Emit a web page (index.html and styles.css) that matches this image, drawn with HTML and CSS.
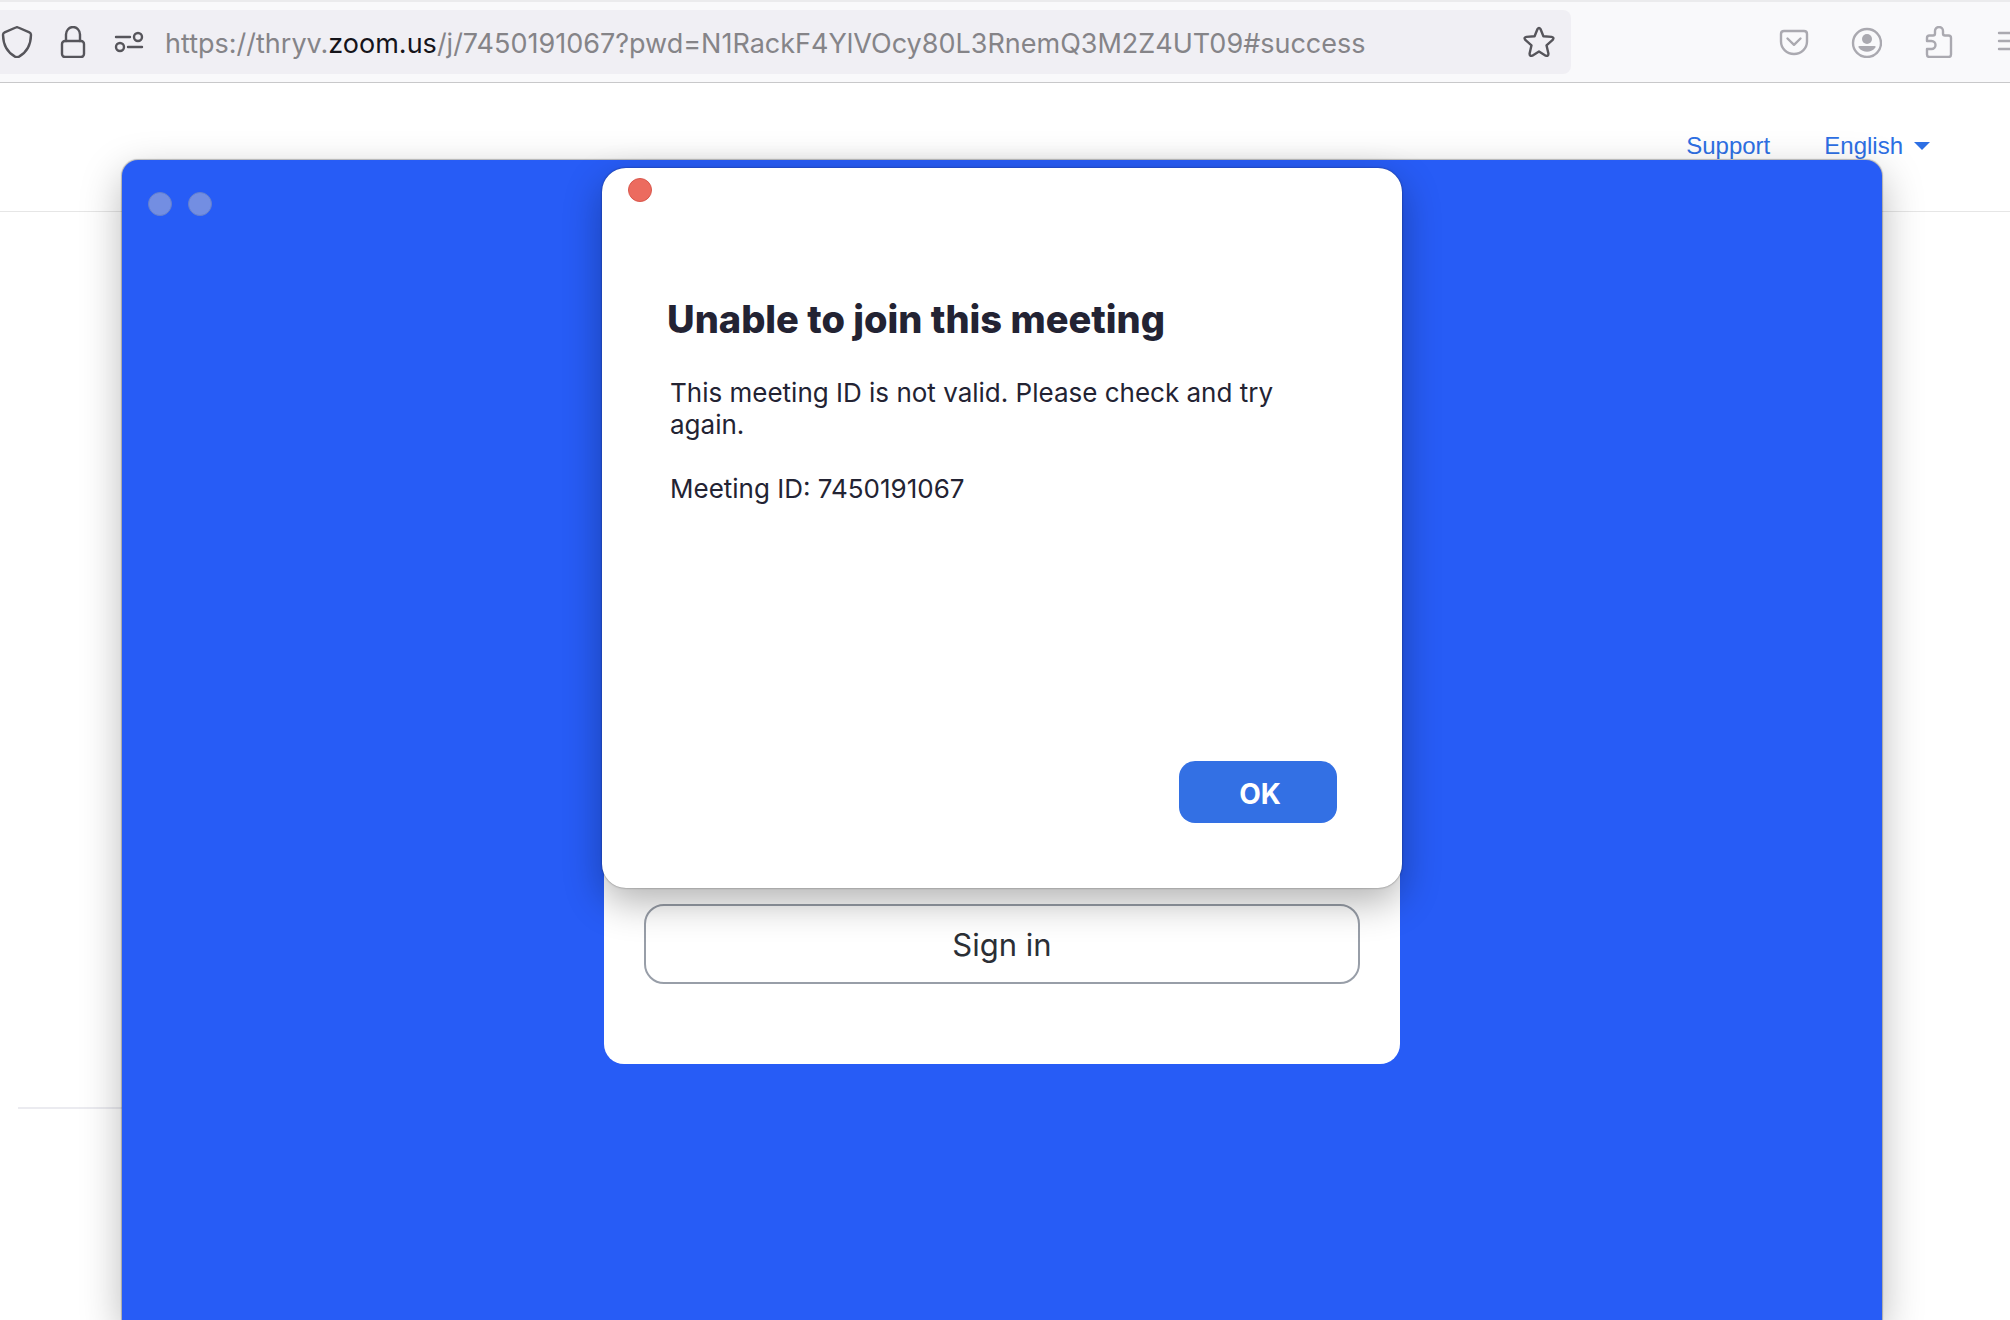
FILE: index.html
```html
<!DOCTYPE html>
<html lang="en">
<head>
<meta charset="utf-8">
<title>Launch Meeting - Zoom</title>
<link rel="stylesheet" href="styles.css">
</head>
<body>
<header class="toolbar">
  <div class="urlbar">
    <button class="icon-button dark" aria-label="Tracking protection">
      <svg viewBox="0 0 32 32"><path d="M14.8 1.5Q16 .9 17.2 1.5L28.4 6.3Q30 7 30 8.8C29.8 19 25.5 26.5 18 30.6Q16 31.6 14 30.6C6.500 26.500 2.200 19 2 8.800Q2 7 3.600 6.300Z"/></svg>
    </button>
    <button class="icon-button dark" aria-label="Site security">
      <svg viewBox="0 0 32 32"><rect x="5" y="15" width="22" height="16" rx="3"/><path d="M9 15V8.500a7 7.500 0 0 1 14 0V15"/></svg>
    </button>
    <button class="icon-button dark" aria-label="Permissions">
      <svg viewBox="0 0 32 32"><path d="M3 11H17M15 21H29"/><circle cx="25" cy="11" r="4"/><circle cx="7" cy="21" r="4"/></svg>
    </button>
    <div class="address" role="textbox" aria-label="Address" contenteditable="true" spellcheck="false">https://thryv.<span class="domain">zoom.us</span>/j/7450191067?pwd=N1RackF4YlVOcy80L3RnemQ3M2Z4UT09#success</div>
    <button class="icon-button dark" aria-label="Bookmark this page">
      <svg viewBox="0 0 32 32"><path d="M14.400 3.200Q16 .8 17.600 3.200L20.400 10.200L28.600 10.900Q31.600 11.600 29.700 13.900L23.500 19.300L25.400 27.500Q25.500 30.600 22.700 29.700L16 25.500L9.300 29.700Q6.500 30.600 6.600 27.500L8.500 19.300L2.300 13.900Q.4 11.600 3.400 10.900L11.600 10.200Z"/></svg>
    </button>
  </div>
  <div class="tools">
    <button class="icon-button" aria-label="Save to Pocket">
      <svg viewBox="0 0 32 32"><path d="M6 5H26Q29 5 29 8V15.500a13 12.500 0 0 1-26 0V8Q3 5 6 5Z"/><path d="M9.500 12.500L16 18.800L22.500 12.500"/></svg>
    </button>
    <button class="icon-button" aria-label="Account">
      <svg viewBox="0 0 32 32"><circle cx="17" cy="17" r="14"/><circle class="solid" cx="17" cy="13" r="5"/><path class="solid" d="M9.500 20H24.500Q26.500 20 25 22C21 27 13 27 9 22Q7.500 20 9.500 20Z"/></svg>
    </button>
    <button class="icon-button" aria-label="Extensions">
      <svg viewBox="0 0 32 32"><path d="M5 15V12Q5 9.500 7.500 9.500H11Q13 9.500 13 7.500V5a4 4 0 0 1 8 0V7.500Q21 9.500 23 9.500H26.500Q29 9.500 29 12V28.500Q29 31 26.500 31H7.500Q5 31 5 28.500V23H9.500a4 4 0 0 0 0-8Z"/></svg>
    </button>
    <button class="icon-button" aria-label="Menu">
      <svg viewBox="0 0 32 32"><path d="M5 7H27M5 15H27M5 23H27"/></svg>
    </button>
  </div>
</header>

<nav class="site-nav">
  <a href="#support">Support</a>
  <a href="#language" class="language">English <span class="caret"></span></a>
</nav>
<main class="page">
  <hr class="rule">
</main>

<section class="app-window" aria-label="Zoom">
  <div class="window-controls">
    <button class="dot" aria-label="Close window"></button>
    <button class="dot" aria-label="Minimize window"></button>
  </div>
  <div class="card">
    <button class="sign-in">Sign in</button>
  </div>
  <div class="dialog" role="dialog" aria-labelledby="dialog-title">
    <button class="dot close" aria-label="Close"></button>
    <h1 class="title" id="dialog-title">Unable to join this meeting</h1>
    <div class="message">
      <p>This meeting ID is not valid. Please check and try again.</p>
      <p>Meeting ID: 7450191067</p>
    </div>
    <button class="ok">OK</button>
  </div>
</section>
</body>
</html>
```

FILE: styles.css
```css
* { box-sizing: border-box; }

body {
  position: relative;
  display: flex;
  flex-direction: column;
  min-height: 100vh;
  margin: 0;
  overflow: hidden;
  background: #fff;
  font-family: Inter, "Liberation Sans", sans-serif;
}

button {
  margin: 0;
  padding: 0;
  border: 0;
  background: none;
  font-family: inherit;
}

/* Browser toolbar */
.toolbar {
  display: flex;
  align-items: center;
  padding: 8px 0;
  border-top: 2px solid #ebebed;
  border-bottom: 1px solid #c8c8ca;
  background: #f9f9fb;
  overflow: hidden;
}

.urlbar {
  display: flex;
  flex: 1;
  align-items: center;
  gap: 24px;
  min-width: 0;
  height: 64px;
  padding: 0 16px 0 1px;
  border-radius: 0 8px 8px 0;
  background: #f0eff4;
}

.icon-button {
  flex: none;
  width: 32px;
  height: 32px;
  color: #aaa9b0;
}

.icon-button.dark { color: #56555b; }

.icon-button svg {
  display: block;
  width: 32px;
  height: 32px;
  fill: none;
  stroke: currentColor;
  stroke-width: 2.4;
  stroke-linecap: round;
  stroke-linejoin: round;
}

.icon-button .solid {
  fill: currentColor;
  stroke: none;
}

.address {
  flex: 1;
  margin-left: -4px;
  padding-top: 4px;
  overflow: hidden;
  color: #858488;
  font-size: 27px;
  line-height: 36px;
  white-space: nowrap;
}

.domain { color: #15141a; }

.tools {
  display: flex;
  gap: 40px;
  margin-right: -16px;
  padding-left: 207px;
}

/* Site header */
.site-nav {
  display: flex;
  align-items: center;
  justify-content: flex-end;
  gap: 54px;
  height: 129px;
  padding: 0 80px 2px 0;
  border-bottom: 1px solid #e6e6e6;
  font-family: "Liberation Sans", sans-serif;
  font-size: 24px;
  line-height: 28px;
}

.site-nav a {
  color: #2d6fe4;
  text-decoration: none;
}

.language {
  display: flex;
  align-items: center;
  gap: 11px;
}

.caret {
  border: 8px solid transparent;
  border-top-color: currentColor;
  border-bottom: 0;
}

.page { padding: 895px 140px 0 18px; }

.rule {
  height: 2px;
  margin: 0;
  border: 0;
  background: #ebebf0;
}

/* App window floating over the page */
.app-window {
  position: absolute;
  top: 160px;
  right: 128px;
  bottom: 0;
  left: 122px;
  border-radius: 16px 16px 0 0;
  background: #275cf6;
  box-shadow: 0 0 1px 1px rgba(0, 0, 0, .25), 0 14px 42px rgba(0, 0, 0, .28);
}

.window-controls {
  display: flex;
  gap: 16px;
  padding: 32px 26px;
}

.dot {
  width: 24px;
  height: 24px;
  border: 1px solid #6580cd;
  border-radius: 50%;
  background: #738ee2;
}

.card {
  display: flex;
  flex-direction: column;
  justify-content: flex-end;
  width: 796px;
  height: 816px;
  margin: 0 auto;
  padding: 80px 40px;
  border-radius: 20px;
  background: #fff;
}

.sign-in {
  height: 80px;
  border: 2px solid #989ea8;
  border-radius: 20px;
  color: #2b2f36;
  font-size: 31px;
}

.dialog {
  position: absolute;
  top: 8px;
  left: 50%;
  display: flex;
  flex-direction: column;
  width: 800px;
  height: 720px;
  margin-left: -400px;
  padding: 10px 65px 65px;
  border-radius: 24px;
  background: #fff;
  color: #232333;
  box-shadow: 0 0 2px rgba(0, 0, 0, .5), 0 14px 38px rgba(0, 0, 0, .3);
}

.dot.close {
  margin-left: -39px;
  border-color: #d9574c;
  background: #ec6b5f;
}

.title {
  margin: 93px 0 34px;
  font-size: 38px;
  font-weight: 800;
  line-height: 48px;
}

.message {
  padding: 0 3px;
  font-size: 26px;
  line-height: 32px;
}

.message p { margin: 0 0 32px; }

.ok {
  align-self: flex-end;
  width: 158px;
  height: 62px;
  margin-top: auto;
  padding: 4px 0 0 4px;
  border-radius: 16px;
  background: #3370e4;
  color: #fff;
  font-size: 28px;
  font-weight: 700;
}
```
